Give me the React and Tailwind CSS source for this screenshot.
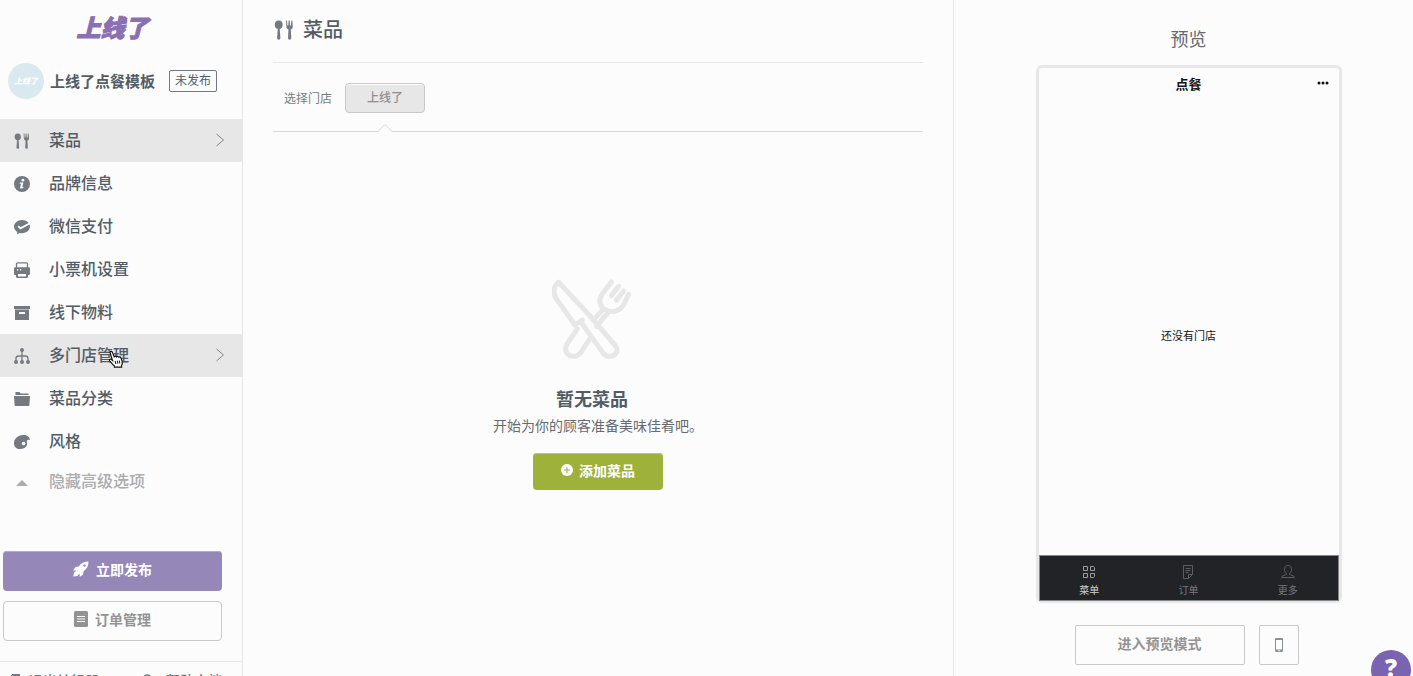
import { useState } from 'react'

function SpoonForkIcon({ className }) {
    return (
        <svg viewBox="0 0 20 20" className={className} fill="currentColor" aria-hidden="true">
            <ellipse cx="4.700" cy="4.800" rx="3.900" ry="4.300" />
            <path d="M3.800 8.500h1.900l.7 9.600a1.600 1.600 0 0 1-3.300 0z" />
            <path d="M12 .6h1l.4 5h.9l.3-5h1.100l.3 5h.9l.4-5h1l.5 6c0 1.600-.8 2.600-2 3l.5 8.500a1.600 1.600 0 0 1-3.300 0l.5-8.500c-1.300-.4-2.100-1.400-2.100-3z" />
        </svg>
    )
}

function InfoIcon() {
    return (
        <svg viewBox="0 0 16 16" className="size-4" aria-hidden="true">
            <circle cx="8" cy="8" r="8" fill="currentColor" />
            <circle cx="8.900" cy="4.200" r="1.400" fill="#fcfcfc" />
            <path d="M6 6.600h3.400l-1.200 4.500 1.300-.3-.3 1.100c-1 .7-3.400 1.200-3.100-.5l.9-3.700H5.700z" fill="#fcfcfc" />
        </svg>
    )
}

function PayIcon() {
    return (
        <svg viewBox="0 0 16 16" className="size-4" aria-hidden="true">
            <path d="M8 1c4.400 0 8 2.900 8 6.600s-3.600 6.600-8 6.600c-.9 0-1.700-.1-2.500-.3L3 15.600l.2-2.600C1.200 11.800 0 9.800 0 7.600 0 3.900 3.600 1 8 1z" fill="currentColor" />
            <path d="M4.200 7.200l2.300 2.200L16 4.300" fill="none" stroke="#fcfcfc" strokeWidth="1.800" />
        </svg>
    )
}

function PrinterIcon() {
    return (
        <svg viewBox="0 0 16 16" className="size-4" aria-hidden="true">
            <path d="M2.500 6V2c0-.8.5-1.200 1.200-1.200h8.600c.7 0 1.200.4 1.200 1.200V6" fill="none" stroke="currentColor" strokeWidth="1.300" />
            <path d="M1.200 5.200h13.600c.7 0 1.200.5 1.200 1.200v5.400c0 .8-.5 1.200-1.200 1.200H14v1.800c0 .7-.5 1.200-1.200 1.200H3.200c-.7 0-1.200-.5-1.200-1.200V13h-.8C.5 13 0 12.600 0 11.800V6.400c0-.7.5-1.200 1.200-1.200z" fill="currentColor" />
            <path d="M4 12h8v2.500H4zM3 7h1.200v1.500H3zM6 7h1.200v1.500H6z" fill="#fcfcfc" />
        </svg>
    )
}

function BoxIcon() {
    return (
        <svg viewBox="0 0 16 16" className="size-4" fill="currentColor" aria-hidden="true">
            <path d="M0 1h16v3H0z" />
            <path fillRule="evenodd" d="M1 4.500h14V15H1zM5 7v2h6V7z" />
        </svg>
    )
}

function TreeIcon() {
    return (
        <svg viewBox="0 0 16 16" className="size-4" fill="currentColor" aria-hidden="true">
            <circle cx="8" cy="2" r="2" />
            <circle cx="2" cy="14" r="2" />
            <circle cx="8" cy="14" r="2" />
            <circle cx="14" cy="14" r="2" />
            <path d="M8 3v10M2 13v-2.500c0-1.500 1-2.500 2.500-2.500h7c1.500 0 2.500 1 2.500 2.500V13" fill="none" stroke="currentColor" strokeWidth="1.300" />
        </svg>
    )
}

function FolderIcon() {
    return (
        <svg viewBox="0 0 16 16" className="size-4" fill="currentColor" aria-hidden="true">
            <path d="M1.500 1h4l1.200 1.400h7.800V4h-13z" />
            <path d="M0 5h16l-.6 9c0 .6-.4 1-1 1H1.600c-.6 0-1-.4-1-1z" />
        </svg>
    )
}

function PaletteIcon() {
    return (
        <svg viewBox="0 0 16 16" className="size-4" aria-hidden="true">
            <path d="M9 1c3.500-.3 6.500 1.400 7 5-1.400-.5-3-.2-3.200 1.200-.2 1.300.8 2 .2 3.800-.9 2.600-3.700 4-7 4C2.600 15 0 12.800 0 9.200 0 4.700 4 1.300 9 1z" fill="currentColor" />
            <circle cx="9.600" cy="9.600" r="1.800" fill="#fcfcfc" />
        </svg>
    )
}

function RocketIcon() {
    return (
        <svg viewBox="0 0 16 16" className="size-4" aria-hidden="true">
            <path d="M15.500.5c-4.500 0-7.500 1.700-9.800 5L2.500 6 0 9.600l3.200-.2-.7 1.200-1.500 1-.6 4 4-.7 1-1.400 1.300-.6-.1 3.100 3.500-2.600.5-3.200c3.300-2.300 4.900-5.200 4.900-9.700z" fill="currentColor" />
            <circle cx="11.500" cy="4.500" r="1.200" fill="#9687b9" />
        </svg>
    )
}

function CutleryIcon() {
    return (
        <svg viewBox="0 0 240 240" className="size-20" fill="none" stroke="#e7e7e7" strokeWidth="15" strokeLinecap="round" strokeLinejoin="round" aria-hidden="true">
            {/* knife */}
            <path d="M20 10C6 18 2 40 12 58l57 80 22-15" />
            <path d="M20 10l91 97 79 93c12 16 0 32-17 32-8 0-14-3-19-9l-66-92" />
            {/* fork */}
            <path d="M76 150l-29 42c-14 22-2 40 19 40 9 0 15-4 20-11l27-41" />
            <path d="M152 92l-28 32M168 100l-34 42" />
            <path d="M178 9l-28 37c-12 18-6 38 10 46 18 10 40 6 52-10l18-36" />
            <path d="M200 22l-22 28M215 36l-22 28" />
        </svg>
    )
}

function HandCursor() {
    return (
        <svg viewBox="0 0 16 18" className="pointer-events-none absolute left-[108px] top-4 z-10 h-[18px] w-4" aria-hidden="true">
            <path d="M4.500 10.500L2.200 3.200c-.6-2 1.500-2.600 2.200-.8l1.800 4.400c.5-.9 1.900-.8 2.300.1.600-.8 1.900-.6 2.200.3.700-.7 1.900-.3 2.200.7l1.300 3.600c.4 1.800 0 3-.7 4l.1 1.700H6.500l-.3-1.500c-1.400-1-2.600-2.800-4.500-4.800-.9-1.100.4-2.300 1.500-1.500z" fill="#fff" stroke="#111" strokeWidth="1.200" />
            <path d="M7.200 11l.7 3M9.300 10.700l.6 3M11.300 10.500l.5 3" stroke="#111" strokeWidth="1" />
        </svg>
    )
}

const menuItems = [
    { id: 'dishes', label: '菜品', icon: <SpoonForkIcon className="size-4" /> },
    { id: 'brand', label: '品牌信息', icon: <InfoIcon /> },
    { id: 'pay', label: '微信支付', icon: <PayIcon /> },
    { id: 'printer', label: '小票机设置', icon: <PrinterIcon /> },
    { id: 'material', label: '线下物料', icon: <BoxIcon /> },
    { id: 'stores', label: '多门店管理', icon: <TreeIcon />, hovered: true },
    { id: 'category', label: '菜品分类', icon: <FolderIcon /> },
    { id: 'style', label: '风格', icon: <PaletteIcon /> },
]

function MenuItem({ item, active, onSelect }) {
    const highlight = active || item.hovered
    return (
        <li className="relative">
            <button
                type="button"
                onClick={onSelect}
                className={`flex h-[43px] w-full items-center pb-0.5 pl-3.5 pr-[17px] text-left ${highlight ? 'bg-[#e7e7e7]' : ''}`}
            >
                <span className="mt-0.5 text-[#737a82]">{item.icon}</span>
                <span className="ml-[19px] flex-1 pb-0.5 text-base font-medium text-[#525c67]">{item.label}</span>
                {highlight &&
                    <svg viewBox="0 0 10 14" className="h-3.5 w-2.5" fill="none" stroke="#808488" aria-hidden="true">
                        <path d="M1.500 1l7 6-7 6" />
                    </svg>
                }
            </button>
            {item.hovered && <HandCursor />}
        </li>
    )
}

function Sidebar() {
    const [selected, setSelected] = useState('dishes')

    return (
        <aside className="w-[243px] shrink-0 border-r border-[#e7e7e7]">
            <header className="flex h-[119px] flex-col">
                <h1 className="mt-[11px] w-[225px] text-center text-2xl/8 font-black italic text-[#8a6fb3] [-webkit-text-stroke:1px_#8a6fb3]">上线了</h1>
                <div className="mt-5 flex items-center pl-2">
                    <span className="flex size-9 items-center justify-center rounded-full bg-[#dae8f0] text-[8px] font-black italic text-white">上线了</span>
                    <span className="ml-1.5 text-[15px] font-bold text-[#525c67]">上线了点餐模板</span>
                    <span className="ml-3.5 flex h-[22px] items-center rounded-xs border border-[#737a82] px-[5px] pb-0.5 text-xs text-[#525c67]">未发布</span>
                </div>
            </header>
            <nav>
                <ul>
                    {menuItems.map((item) => (
                        <MenuItem key={item.id} item={item} active={selected === item.id} onSelect={() => setSelected(item.id)} />
                    ))}
                </ul>
                <button type="button" className="flex h-[37px] w-full items-center pb-0.5 pl-4 text-base font-medium text-[#aaacaf]">
                    <svg viewBox="0 0 12 6" className="mt-1 h-1.5 w-3" fill="currentColor" aria-hidden="true">
                        <path d="M6 0l6 6H0z" />
                    </svg>
                    <span className="ml-[21px] pb-0.5">隐藏高级选项</span>
                </button>
            </nav>
            <div className="mt-[51px] flex flex-col gap-2.5 pl-[3px] pr-5">
                <button type="button" className="flex h-10 items-center justify-center gap-[7px] rounded-sm bg-[#9687b9] pb-1 text-sm font-bold text-white inset-shadow-[0_1px_0_#b5aacd]">
                    <RocketIcon />
                    立即发布
                </button>
                <button type="button" className="flex h-10 items-center justify-center gap-[7px] rounded-sm border border-[#c8c8c8] pb-1 text-sm font-bold text-[#939393]">
                    <svg viewBox="0 0 14 16" className="h-4 w-3.5" aria-hidden="true">
                        <rect width="14" height="16" rx="1.500" fill="currentColor" />
                        <path d="M3 5.500h8M3 8h8M3 10.500h8" stroke="#fcfcfc" strokeWidth="1.100" />
                    </svg>
                    订单管理
                </button>
            </div>
            <footer className="mt-5 flex justify-between border-t border-[#e7e7e7] pl-[11px] pr-5 pt-2 text-sm font-medium text-[#777b80]">
                <a href="#exit" className="flex items-center gap-2">
                    <svg viewBox="0 0 10 12" className="h-3 w-2.5" fill="none" stroke="currentColor" strokeWidth="2" aria-hidden="true">
                        <path d="M1 1h7v4M1 1v10h7V8M4 6.500h6" />
                    </svg>
                    退出编辑器
                </a>
                <a href="#help" className="flex items-center gap-3">
                    <svg viewBox="0 0 12 14" className="h-3.5 w-3" fill="none" stroke="currentColor" strokeWidth="1.500" aria-hidden="true">
                        <path d="M2 5c0-4 6.500-4 6.500-.5S5.200 7 5.200 9.500M9 4.500l2 2.500" />
                    </svg>
                    帮助文档
                </a>
            </footer>
        </aside>
    )
}

function DishesPanel() {
    return (
        <main className="min-w-0 flex-1 px-[30px]">
            <div className="flex h-[63px] items-center gap-[9px] border-b border-[#e7e7e7] pb-0.5 pl-px">
                <SpoonForkIcon className="size-5 text-[#737a82]" />
                <h2 className="pb-0.5 text-xl font-medium text-[#525c67]">菜品</h2>
            </div>
            <div className="relative flex h-[69px] items-center border-b border-[#d8d8d8] pl-[11px] pt-0.5">
                <span className="text-xs text-[#777b80]">选择门店</span>
                <button type="button" className="ml-[13px] h-[30px] w-20 rounded-sm border border-[#c8c8c8] bg-[#e7e7e7] pb-0.5 text-xs font-medium text-[#8e8e8e] inset-shadow-[0_1px_0_#fff]">上线了</button>
                <svg viewBox="0 0 14 8" className="absolute -bottom-px left-[105px] h-2 w-3.5" aria-hidden="true">
                    <path d="M0 8l7-7 7 7z" fill="#fcfcfc" />
                    <path d="M0 7.500l7-7 7 7" fill="none" stroke="#d8d8d8" />
                </svg>
            </div>
            <section className="flex flex-col items-center pt-[147px]">
                <div className="flex flex-col items-center pr-3">
                    <CutleryIcon />
                    <h3 className="mt-[25px] text-lg/7 font-bold text-[#525c67]">暂无菜品</h3>
                </div>
                <p className="mt-px text-sm/6 text-[#666a70]">开始为你的顾客准备美味佳肴吧。</p>
                <button type="button" className="mt-4 flex h-[37px] w-[130px] items-center justify-center gap-1.5 rounded-sm bg-[#9eb13b] pb-1 text-sm font-bold text-white inset-shadow-[0_1px_0_#bbc876]">
                    <svg viewBox="0 0 12 12" className="size-3" aria-hidden="true">
                        <circle cx="6" cy="6" r="6" fill="#fff" />
                        <path d="M6 3v6M3 6h6" stroke="#9eb13b" />
                    </svg>
                    添加菜品
                </button>
            </section>
        </main>
    )
}

const tabs = [
    { label: '菜单', color: 'text-[#d0d0d2]', icon: <path d="M1.500 1.500h4v4h-4zM8.500 1.500h3l1 1v3h-4zM1.500 8.500h4v4h-4zM8.500 8.500h4v3l-1 1h-3z" /> },
    { label: '订单', color: 'text-[#77787b]', icon: <path d="M2.500.5h9v9l-4 4h-5zM7.500 13.500v-4h4M4.500 3.500h5M4.500 5.500h5M4.500 7.500h3" /> },
    { label: '更多', color: 'text-[#77787b]', icon: <path d="M7 .5c-2.500 0-3.500 1.500-3.500 4 0 2 .8 3.500 2 4v1l-4 1.500c-.6.3-1 1-1 1.500h13c0-.5-.4-1.200-1-1.500l-4-1.500v-1c1.200-.5 2-2 2-4 0-2.500-1-4-3.500-4z" /> },
]

function Preview() {
    return (
        <aside className="flex w-[460px] shrink-0 flex-col items-center border-l border-[#e7e7e7] pl-2.5">
            <h2 className="mt-6 text-lg/7 text-[#666a70]">预览</h2>
            <div className="mt-[13px] flex h-[538px] w-[306px] flex-col rounded-md border-[3px] border-b-2 border-[#e7e7e7]">
                <div className="grid h-8 grid-cols-3 items-center px-2.5 text-[13px] font-bold text-[#111]">
                    <span className="col-start-2 text-center">点餐</span>
                    <svg viewBox="0 0 12 4" className="mb-0.5 h-1 w-3 justify-self-end" fill="currentColor" aria-hidden="true">
                        <circle cx="2" cy="2" r="1.500" />
                        <circle cx="6" cy="2" r="1.500" />
                        <circle cx="10" cy="2" r="1.500" />
                    </svg>
                </div>
                <div className="flex flex-1 items-center justify-center pt-4 text-[11px] text-[#111]">还没有门店</div>
                <div className="grid h-[46px] grid-cols-3 border border-[#85868a] bg-[#222327]">
                    {tabs.map((tab) => (
                        <button key={tab.label} type="button" className={`flex flex-col items-center justify-center gap-[3px] pt-1.5 text-[10px]/4 ${tab.color}`}>
                            <svg viewBox="0 0 14 14" className="size-3.5 opacity-70" fill="none" stroke="currentColor" aria-hidden="true">{tab.icon}</svg>
                            {tab.label}
                        </button>
                    ))}
                </div>
            </div>
            <div className="mt-[22px] flex gap-3.5 pr-1">
                <button type="button" className="h-10 w-[170px] rounded-xs border border-[#c8c8c8] pb-1 text-sm font-bold text-[#939393]">进入预览模式</button>
                <button type="button" aria-label="手机" className="flex size-10 items-center justify-center rounded-xs border border-[#c8c8c8] text-[#8b9096]">
                    <svg viewBox="0 0 8 14" className="h-3.5 w-2" aria-hidden="true">
                        <path fillRule="evenodd" d="M1.200 0h5.600C7.500 0 8 .5 8 1.200v11.600c0 .7-.5 1.200-1.200 1.200H1.200C.5 14 0 13.500 0 12.800V1.200C0 .5.5 0 1.200 0zM1 2v9.500h6V2zM3.200 12.200v1h1.600v-1z" fill="currentColor" />
                    </svg>
                </button>
            </div>
        </aside>
    )
}

export default function App() {
    return (
        <div className="relative flex h-screen overflow-hidden bg-[#fcfcfc] font-['Noto_Sans_CJK_SC',sans-serif]">
            <Sidebar />
            <DishesPanel />
            <Preview />
            <button type="button" className="absolute -bottom-3.5 right-0.5 size-10 rounded-full bg-[#7a63b0] pb-1 font-['Open_Sans',sans-serif] text-2xl font-extrabold text-white">?</button>
        </div>
    )
}
